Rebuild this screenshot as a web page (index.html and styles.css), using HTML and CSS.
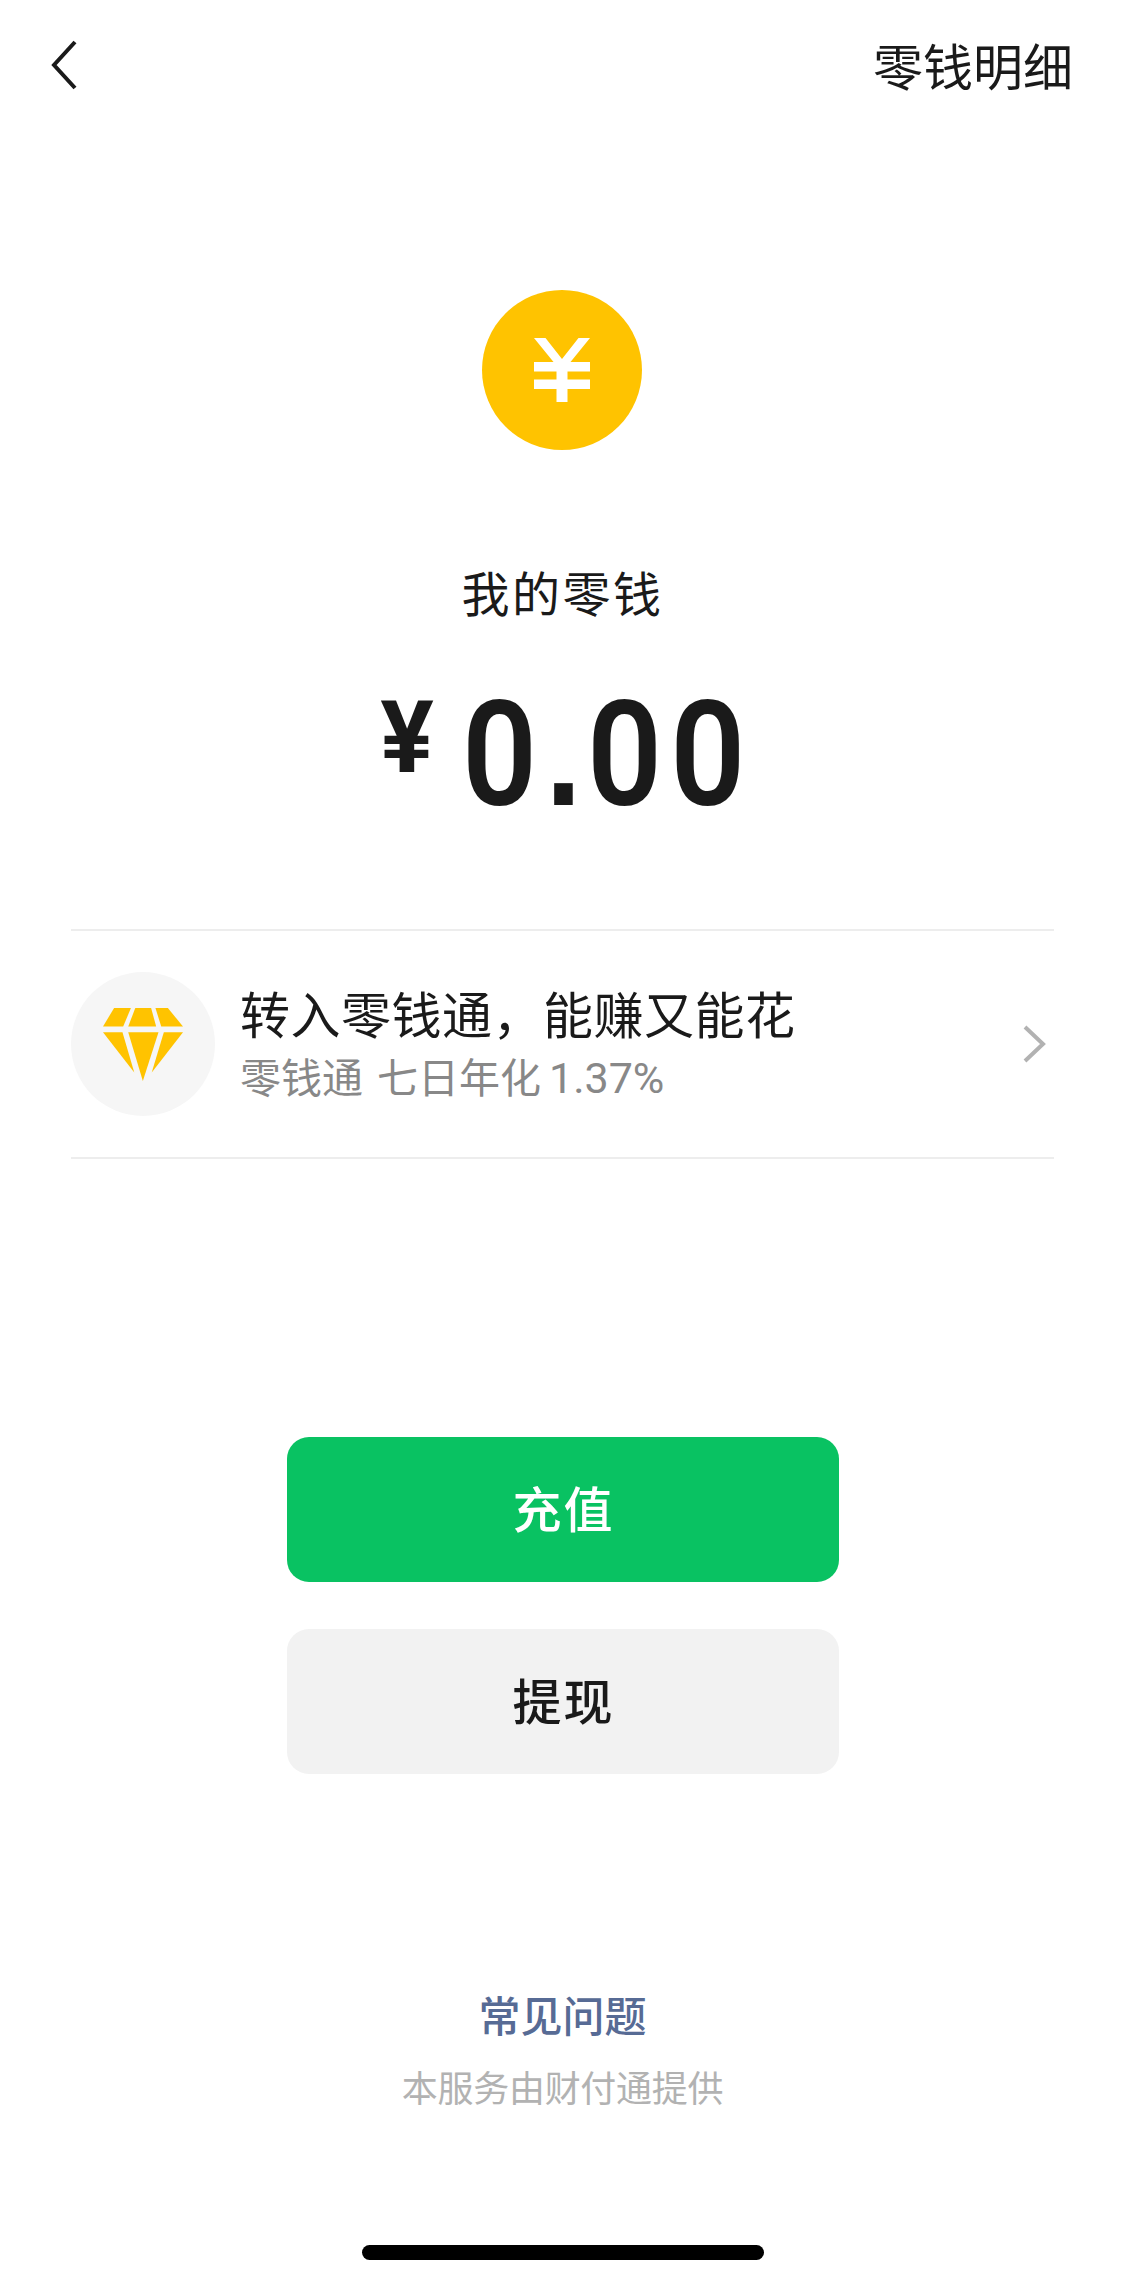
FILE: index.html
```html
<!DOCTYPE html>
<html lang="zh-CN">
<head>
    <meta charset="UTF-8">
    <meta name="viewport" content="width=device-width, initial-scale=1.0">
    <title>我的零钱</title>
    <link rel="stylesheet" href="styles.css">
</head>
<body>
    <div class="page">
        <!-- Top bar -->
        <div class="nav">
            <svg class="nav-back" width="26" height="50" viewBox="0 0 26 50">
                <polyline points="24,2 3,25 24,48" fill="none" stroke="#1a1a1a" stroke-width="4"/>
            </svg>
            <span class="nav-detail">零钱明细</span>
        </div>

        <!-- Balance -->
        <div class="balance">
            <div class="coin">
                <svg width="56" height="64" viewBox="0 0 56 64">
                    <path d="M0 0H11.5L28 21L44.5 0H56L36.5 24H56V33.5H33.5V41.5H56V51H33.5V64H22.5V51H0V41.5H22.5V33.5H0V24H19.5Z" fill="#fff"/>
                </svg>
            </div>
            <div class="balance-label">我的零钱</div>
            <div class="balance-amount">
                <span class="currency">¥</span>
                <span class="number">0<span class="number-dot">.</span>00</span>
            </div>
        </div>

        <!-- Licaitong promo -->
        <div class="promo">
            <div class="promo-icon">
                <svg width="80" height="73" viewBox="0 0 79.3 72.3" fill="#ffc300">
                    <polygon points="0,18.3 11,0 27.7,0 20,18.3"/>
                    <polygon points="32,0 47.7,0 52.7,18.3 25,18.3"/>
                    <polygon points="52,0 64.3,0 79.3,18.3 57.7,18.3"/>
                    <polygon points="0,24 19.3,24 31,64"/>
                    <polygon points="25,24 55,24 39.5,72.3"/>
                    <polygon points="60.3,24 79.3,24 48.3,64"/>
                </svg>
            </div>
            <div class="promo-text">
                <div class="promo-title">转入零钱通，能赚又能花</div>
                <div class="promo-sub"><span class="promo-name">零钱通</span>七日年化<span class="promo-rate">1.37%</span></div>
            </div>
            <svg class="promo-arrow" width="24" height="38" viewBox="0 0 24 38">
                <polyline points="3,2 21,19 3,36" fill="none" stroke="#b2b2b2" stroke-width="4"/>
            </svg>
        </div>

        <!-- Actions -->
        <div class="actions">
            <button class="btn btn-green">充值</button>
            <button class="btn btn-gray">提现</button>
        </div>

        <div class="footer">
            <div class="footer-link">常见问题</div>
            <div class="footer-note">本服务由财付通提供</div>
        </div>

        <div class="home-bar"></div>
    </div>
</body>
</html>
```

FILE: styles.css
```css
* {
    box-sizing: border-box;
}

body {
    margin: 0;
    background: #fff;
    color: #1a1a1a;
    font-family: "Noto Sans CJK SC", "Noto Sans", sans-serif;
}

.page {
    width: 1125px;
    height: 2284px;
    overflow: hidden;
    display: flex;
    flex-direction: column;
    align-items: center;
}

.nav {
    width: 100%;
    height: 130px;
    padding: 0 52px 0 51px;
    display: flex;
    align-items: center;
    justify-content: space-between;
}

.nav-detail {
    font-size: 50px;
    line-height: 60px;
    margin-top: -3px;
}

.balance {
    display: flex;
    flex-direction: column;
    align-items: center;
}

.coin {
    width: 160px;
    height: 160px;
    margin: 160px 1px 0 0;
    border-radius: 50%;
    background: #ffc300;
    display: flex;
    align-items: center;
    justify-content: center;
}

.balance-label {
    margin-top: 111px;
    font-size: 48px;
    line-height: 60px;
    letter-spacing: 2.5px;
}

.balance-amount {
    margin-top: 54px;
    height: 160px;
    display: flex;
    align-items: center;
    font-family: Roboto, "Noto Sans", sans-serif;
}

.currency {
    font-size: 100px;
    font-weight: 700;
    line-height: 160px;
    margin-right: 28px;
    position: relative;
    top: -17px;
}

/* digits in the reference are narrower than Roboto */
.number {
    display: inline-block;
    font-size: 146px;
    font-weight: 600;
    line-height: 160px;
    letter-spacing: 9px;
    margin-right: -41px;
    transform: scaleX(0.9);
    transform-origin: left center;
}

.number-dot {
    font-family: "Liberation Sans", sans-serif;
    font-weight: 700;
    letter-spacing: 6px;
}

.promo {
    width: 983px;
    margin-top: 94px;
    padding: 41px 0;
    border-top: 2px solid #ededed;
    border-bottom: 2px solid #ededed;
    display: flex;
    align-items: center;
}

.promo-icon {
    width: 144px;
    height: 144px;
    border-radius: 50%;
    background: #f6f6f6;
    display: flex;
    align-items: center;
    justify-content: center;
    flex-shrink: 0;
}

.promo-text {
    flex: 1;
    margin: -3px 0 0 25px;
}

.promo-title {
    font-size: 50px;
    line-height: 60px;
    letter-spacing: 0.5px;
}

.promo-sub {
    margin-top: 8px;
    font-size: 41px;
    line-height: 50px;
    color: #888;
}

.promo-name {
    margin-right: 14px;
}

.promo-rate {
    margin-left: 8px;
    font-family: Roboto, "Noto Sans", sans-serif;
    font-size: 43px;
}

.promo-arrow {
    margin-right: 8px;
}

.actions {
    margin-top: 278px;
    display: flex;
    flex-direction: column;
    gap: 47px;
}

.btn {
    width: 552px;
    height: 145px;
    padding: 0 0 7px 2px;
    border: none;
    border-radius: 22px;
    font-family: inherit;
    font-size: 49px;
    font-weight: 500;
    letter-spacing: 2px;
}

.btn-green {
    background: #09c262;
    color: #fff;
}

.btn-gray {
    background: #f2f2f2;
    color: #1a1a1a;
}

.footer {
    margin-top: 215px;
    text-align: center;
}

.footer-link {
    font-size: 42px;
    font-weight: 500;
    line-height: 50px;
    color: #576b95;
}

.footer-note {
    margin-top: 22px;
    font-size: 36px;
    line-height: 50px;
    letter-spacing: -0.3px;
    color: #b2b2b2;
}

.home-bar {
    width: 402px;
    height: 15px;
    margin-top: 134px;
    border-radius: 8px;
    background: #000;
}
```
